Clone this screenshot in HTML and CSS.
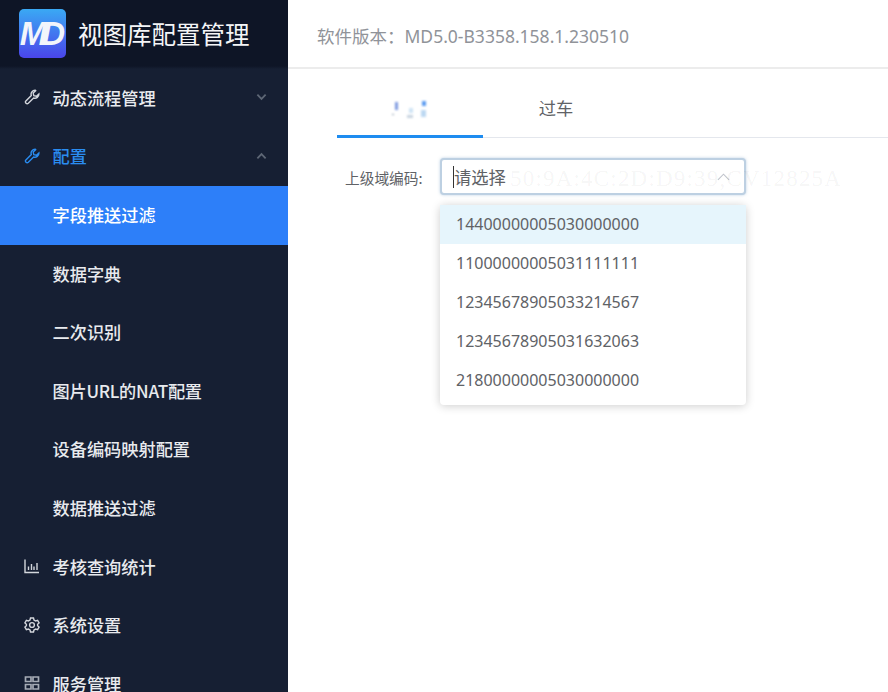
FILE: index.html
```html
<!DOCTYPE html>
<html lang="zh">
<head>
<meta charset="utf-8">
<title>视图库配置管理</title>
<link rel="stylesheet" href="styles.css">
</head>
<body>
<div class="app">
  <aside class="sidebar">
    <div class="brand">
      <div class="logo"><span class="logo-text">MD</span></div>
      <div class="brand-title">视图库配置管理</div>
    </div>
    <nav class="menu">
      <div class="item">
        <svg class="icon" viewBox="0 0 16 16"><path d="M11.200 1.200a4 4 0 0 0-3.900 5.300L1.900 11.900a1.700 1.700 0 0 0 2.400 2.400l5.300-5.300a4 4 0 0 0 5.300-4l-2.500 2.300-2.600-.6-.6-2.600 2.500-2.300z"/></svg>
        <span class="label">动态流程管理</span>
        <svg class="chev" viewBox="0 0 12 8"><path d="M1.500 1.500 6 6l4.500-4.500"/></svg>
      </div>
      <div class="item open">
        <svg class="icon" viewBox="0 0 16 16"><path d="M11.200 1.200a4 4 0 0 0-3.900 5.300L1.900 11.900a1.700 1.700 0 0 0 2.400 2.400l5.300-5.300a4 4 0 0 0 5.300-4l-2.500 2.300-2.600-.6-.6-2.600 2.500-2.300z"/></svg>
        <span class="label">配置</span>
        <svg class="chev" viewBox="0 0 12 8"><path d="M1.500 6.500 6 2l4.500 4.500"/></svg>
      </div>
      <div class="item active"><span class="label">字段推送过滤</span></div>
      <div class="item sub"><span class="label">数据字典</span></div>
      <div class="item sub"><span class="label">二次识别</span></div>
      <div class="item sub"><span class="label tight">图片URL的NAT配置</span></div>
      <div class="item sub"><span class="label">设备编码映射配置</span></div>
      <div class="item sub"><span class="label">数据推送过滤</span></div>
      <div class="item">
        <svg class="icon" viewBox="0 0 16 16"><path d="M1 1.500V14.500H15"/><path d="M4.500 12V8.500M7.500 12V6M10 12V8.500M13 12V5"/></svg>
        <span class="label">考核查询统计</span>
      </div>
      <div class="item">
        <svg class="icon" viewBox="0 0 16 16"><path d="M6.500 1h3l.5 2 1.600.9 2-.6 1.500 2.600-1.500 1.400v1.400l1.500 1.400-1.500 2.600-2-.6-1.600.9-.5 2h-3l-.5-2-1.600-.9-2 .6L.9 10.100l1.500-1.400V7.300L.9 5.900l1.500-2.600 2 .6L6 3z"/><circle cx="8" cy="8" r="2.400"/></svg>
        <span class="label">系统设置</span>
      </div>
      <div class="item">
        <svg class="icon icon-grid" viewBox="0 0 16 16"><path d="M1.500 2h5.500v4.500H1.500zM9 2h5.500v4.500H9zM1.500 9.500h5.500v4.500H1.500zM9 9.500h5.500v4.500H9z"/></svg>
        <span class="label">服务管理</span>
      </div>
    </nav>
  </aside>
  <main class="main">
    <header class="topbar">
      <div class="version">软件版本&#xFF1A;MD5.0-B3358.158.1.230510</div>
    </header>
    <div class="tabs">
      <div class="tab current">
        <svg class="blur-text" viewBox="0 0 36 20"><rect x="3" y="3" width="3" height="8" fill="#7f9be0"/><rect x="17" y="9" width="4" height="5" fill="#cfe4f5"/><rect x="30" y="2" width="4" height="5" fill="#5b9bf0"/><rect x="29" y="11" width="5" height="7" fill="#bcd8f2"/><rect x="0" y="15" width="2" height="1" fill="#8899aa"/><rect x="15" y="16" width="6" height="3" fill="#c8d4e0"/></svg>
      </div>
      <div class="tab">过车</div>
    </div>
    <div class="form">
      <label class="form-label">上级域编码:</label>
      <div class="select">
        <span class="placeholder">请选择</span>
        <svg class="select-arrow" viewBox="0 0 14 8"><path d="M1 7 7 1l6 6"/></svg>
      </div>
      <div class="watermark">50:9A:4C:2D:D9:39,CV12825A</div>
      <ul class="dropdown">
        <li class="hover">14400000005030000000</li>
        <li>11000000005031111111</li>
        <li>12345678905033214567</li>
        <li>12345678905031632063</li>
        <li>21800000005030000000</li>
      </ul>
    </div>
  </main>
</div>
</body>
</html>
```
FILE: styles.css
```css
* { box-sizing: border-box; }
html, body { margin: 0; height: 100%; overflow: hidden; background: #fff; }
body { font-family: "Noto Sans", "Noto Sans CJK SC", sans-serif; }
.app { display: flex; width: 888px; height: 692px; overflow: hidden; }

.sidebar { width: 288px; flex: none; background: #161f33; overflow: hidden; color: #e6e8ec; }
.brand { height: 69px; background: linear-gradient(#0e1526 0, #0e1526 66px, #161f33 69px); display: flex; align-items: center; padding-left: 19px; padding-bottom: 2px; }
.logo { width: 47px; height: 49px; flex: none; border-radius: 5px; background: linear-gradient(#3aa9f4, #4a45ea); display: flex; align-items: center; justify-content: center; overflow: hidden; }
.logo-text { font: italic bold 33px/1 "Liberation Sans", sans-serif; letter-spacing: -6px; margin-left: -6px; color: #f2f5fb; }
.brand-title { margin-left: 12px; font-size: 24.500px; line-height: 34px; color: #f4f5f7; font-family: "Noto Sans CJK SC", sans-serif; }

.menu { display: flex; flex-direction: column; }
.item { height: 58.600px; flex: none; display: flex; align-items: center; padding-left: 24px; padding-right: 21px; padding-bottom: 2px; font-family: "Noto Sans CJK SC", sans-serif; font-size: 17.200px; font-weight: 500; color: #e8eaee; }
.icon { width: 16px; height: 16px; margin-right: 12.500px; flex: none; fill: none; stroke: #d3d6dc; stroke-width: 1.400; }
.icon-grid { stroke: #a5abb5; stroke-width: 1.700; }
.label { flex: 1; white-space: nowrap; }
.tight { letter-spacing: -.25px; }
.chev { width: 11px; height: 8px; flex: none; fill: none; stroke: #5d6675; stroke-width: 2; }
.item.open { color: #2a8cf0; }
.item.open .icon { stroke: #2a8cf0; }
.item.active { background: #2d7ff9; padding-left: 52.500px; color: #fff; }
.item.sub { padding-left: 52.500px; }

.main { flex: 1; min-width: 0; display: flex; flex-direction: column; }
.topbar { height: 69px; flex: none; border-bottom: 2px solid #ececec; display: flex; align-items: center; padding-left: 29px; padding-top: 4px; }
.version { font-size: 17.500px; color: #909399; font-family: "Noto Sans", "Noto Sans CJK SC", sans-serif; }

.tabs { display: flex; height: 69px; margin-left: 49px; border-bottom: 1px solid #e4e7ed; flex: none; }
.tab { width: 146px; height: 69px; display: flex; align-items: center; justify-content: center; padding-top: 8px; font-size: 17.300px; color: #606266; font-family: "Noto Sans CJK SC", sans-serif; }
.tab.current { border-bottom: 3px solid #1e8cf0; padding-top: 14px; }
.blur-text { width: 36px; height: 20px; filter: blur(.8px); }

.form { position: relative; display: flex; align-items: flex-start; padding-top: 20px; padding-left: 57px; }
.form-label { width: 95px; height: 36px; line-height: 40px; font-size: 14.700px; color: #606266; font-family: "Noto Sans CJK SC", sans-serif; white-space: nowrap; }
.select { width: 306px; height: 37px; flex: none; border: 2px solid #bdd0e2; border-radius: 4px; background: #fff; display: flex; align-items: center; justify-content: space-between; padding: 0 14px 0 12px; box-shadow: 0 0 3px rgba(120,160,200,.5); position: relative; }
.placeholder { font-size: 17.300px; line-height: 22px; color: #606266; border-left: 1px solid #333; margin-left: -1px; font-family: "Noto Sans CJK SC", sans-serif; position: relative; z-index: 1; }
.select-arrow { width: 13px; height: 8px; fill: none; stroke: #c0c4cc; stroke-width: 1.200; }
.watermark { position: absolute; left: 222px; top: 28px; font: 23px "Liberation Serif", serif; letter-spacing: 1.200px; color: rgba(0,0,0,.05); white-space: nowrap; pointer-events: none; }
.dropdown { position: absolute; left: 152px; top: 67px; width: 306px; margin: 0; padding: 0 0 5px; list-style: none; background: #fff; border-radius: 4px; box-shadow: 0 1px 10px rgba(0,0,0,.2); }
.dropdown li { height: 39px; line-height: 38px; padding-left: 16px; font-size: 16px; color: #606266; }
.dropdown li.hover { background: #e6f5fc; }
```
